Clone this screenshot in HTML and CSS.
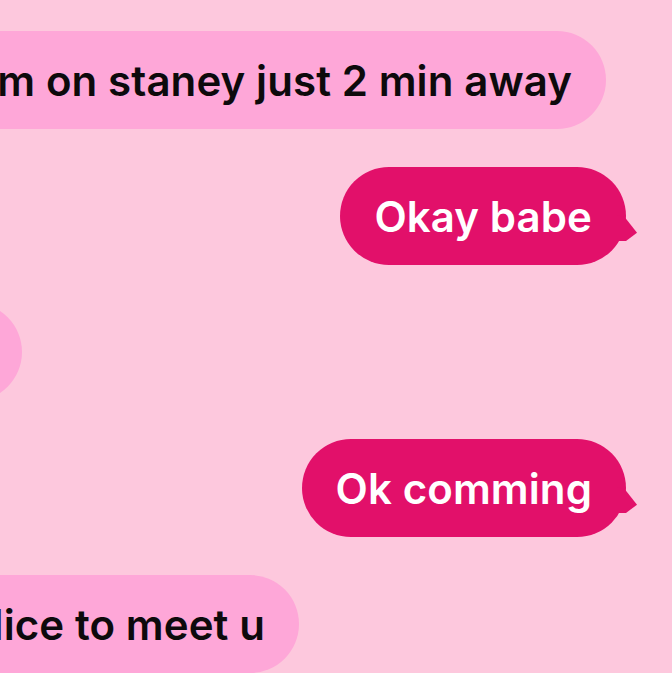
FILE: index.html
```html
<!DOCTYPE html>
<html lang="en">
<head>
    <meta charset="UTF-8">
    <meta name="viewport" content="width=device-width, initial-scale=1.0">
    <title>Chat</title>
    <link rel="stylesheet" href="styles.css">
</head>
<body>
    <div class="chat">
        <div class="row in w-606">
            <div class="bubble recv">Im on staney just 2 min away</div>
        </div>
        <div class="row out">
            <div class="bubble sent">Okay babe</div>
        </div>
        <div class="row in w-22">
            <div class="bubble recv">Where are u</div>
        </div>
        <div class="row out">
            <div class="bubble sent">Ok comming</div>
        </div>
        <div class="row in w-299">
            <div class="bubble recv">Nice to meet u</div>
        </div>
    </div>
</body>
</html>
```

FILE: styles.css
```css
body {
    margin: 0;
    padding: 0;
    background-color: #fdc8dd;
    font-family: Inter, "Noto Sans", sans-serif;
    overflow: hidden;
}

.chat {
    display: flex;
    flex-direction: column;
    gap: 38px;
    padding-top: 31px;
}

.row {
    display: flex;
}

.row.in {
    justify-content: flex-end;
}

.row.out {
    justify-content: flex-end;
    padding-right: 46px;
}

.w-606 {
    width: 606px;
}

.w-22 {
    width: 22px;
}

.w-299 {
    width: 299px;
}

.bubble {
    position: relative;
    flex-shrink: 0;
    height: 98px;
    box-sizing: border-box;
    padding: 0 34px;
    border-radius: 49px;
    display: flex;
    align-items: center;
    white-space: nowrap;
    font-size: 42px;
    font-weight: 600;
    letter-spacing: 0.1px;
}

.recv {
    background-color: #fea7d8;
    color: #0d0a0c;
}

.sent {
    background-color: #e2106a;
    color: #ffffff;
}

    .sent::after {
        content: "";
        position: absolute;
        right: -11px;
        bottom: 24px;
        width: 20px;
        height: 26px;
        background-color: #e2106a;
        clip-path: polygon(0 0, 40% 10%, 100% 68%, 45% 100%, 0 100%);
    }
```
